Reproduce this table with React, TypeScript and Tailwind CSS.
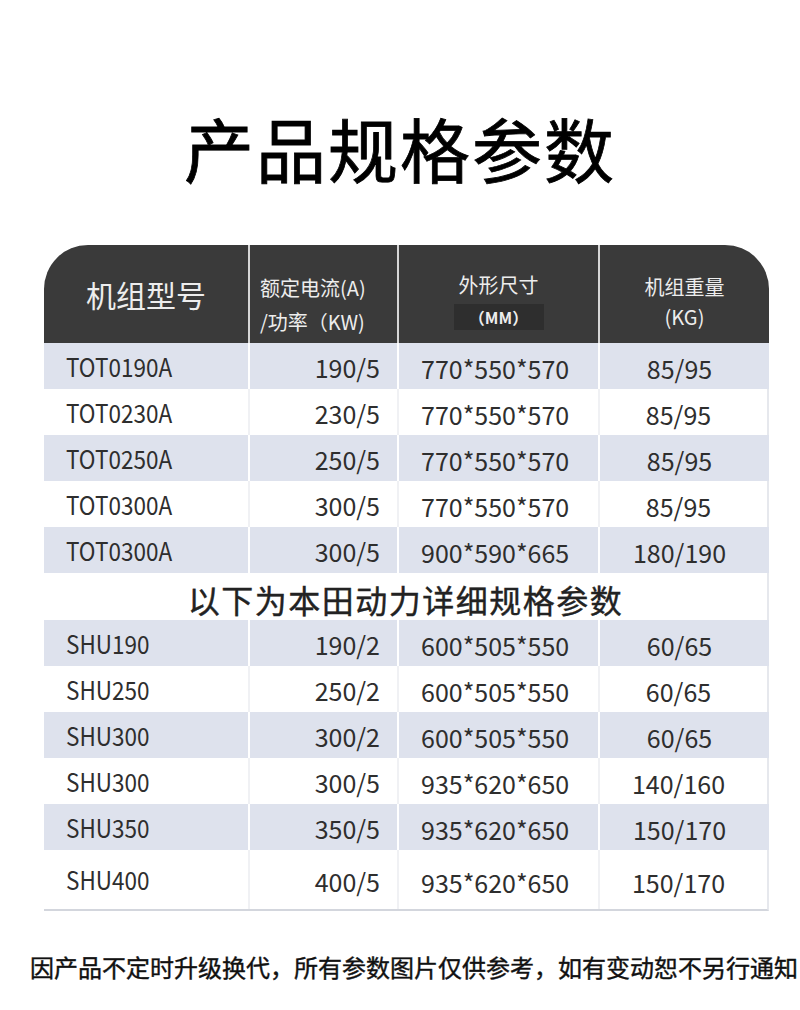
const FONT = "font-['Noto_Sans_CJK_SC','Noto_Sans',sans-serif]";

type Row = [string, string, string, string];

const totRows: Row[] = [
  ['TOT0190A', '190/5', '770*550*570', '85/95'],
  ['TOT0230A', '230/5', '770*550*570', '85/95'],
  ['TOT0250A', '250/5', '770*550*570', '85/95'],
  ['TOT0300A', '300/5', '770*550*570', '85/95'],
  ['TOT0300A', '300/5', '900*590*665', '180/190'],
];

const shuRows: Row[] = [
  ['SHU190', '190/2', '600*505*550', '60/65'],
  ['SHU250', '250/2', '600*505*550', '60/65'],
  ['SHU300', '300/2', '600*505*550', '60/65'],
  ['SHU300', '300/5', '935*620*650', '140/160'],
  ['SHU350', '350/5', '935*620*650', '150/170'],
  ['SHU400', '400/5', '935*620*650', '150/170'],
];

function DataRow({ row, shaded, last }: { row: Row; shaded: boolean; last?: boolean }) {
  const line = shaded ? 'border-white' : 'border-[#f0f1f4]';
  return (
    <div
      className={`grid grid-cols-[204px_149px_201px_1fr] text-[25px] leading-none text-[#2e2e2e] ${
        shaded ? 'bg-[#dee2ed]' : 'bg-white border-r-2 border-[#e6e8ed]'
      } ${last ? 'h-[61px] border-b-2 border-b-[#d3d6dd]' : 'h-[46px]'}`}
    >
      <div className="flex items-center pl-[22px]">
        <span className="inline-block origin-left scale-x-[0.9]">{row[0]}</span>
      </div>
      <div className={`flex items-center justify-end border-l-2 pr-[17px] pt-[3px] ${line}`}>{row[1]}</div>
      <div className={`flex items-center border-l-2 pl-[22px] pt-[5px] ${line}`}>{row[2]}</div>
      <div className={`flex items-center justify-center border-l-2 pr-[10px] pt-[5px] ${line}`}>{row[3]}</div>
    </div>
  );
}

export default function App() {
  return (
    <div className={`min-h-[1010px] w-[800px] bg-white ${FONT}`}>
      <h1 className="pt-[113px] text-center text-[70px] font-normal leading-none tracking-[2px] text-black [-webkit-text-stroke:0.8px_black]">
        产品规格参数
      </h1>

      <div className="ml-[44px] mt-[62px] w-[725px]">
        <div className="grid h-[98px] grid-cols-[204px_149px_201px_1fr] rounded-t-[44px] bg-[#3a3a3a] text-[#ededed]">
          <div className="flex items-center justify-center text-[30px] leading-none">机组型号</div>
          <div className="flex flex-col border-l-2 border-[#d6d6d6] pl-[10px] pt-[26px] text-[20px] leading-[34px]">
            <span>额定电流(A)</span>
            <span>/功率（KW)</span>
          </div>
          <div className="flex flex-col items-center border-l-2 border-[#d6d6d6] pt-[25px] text-[20px] leading-[30px]">
            <span>外形尺寸</span>
            <span className="mt-[4px] flex h-[26px] w-[90px] items-center justify-center bg-[#2e2e2e] text-[16px] font-bold">
              （MM）
            </span>
          </div>
          <div className="flex flex-col items-center border-l-2 border-[#d6d6d6] pt-[27px] text-[20px] leading-[30px]">
            <span>机组重量</span>
            <span>(KG)</span>
          </div>
        </div>

        {totRows.map((r, i) => (
          <DataRow key={'t' + i} row={r} shaded={i % 2 === 0} />
        ))}

        <div className="flex h-[47px] items-center justify-center border-r-2 border-[#e6e8ed] bg-white pt-[4px] text-[32px] font-normal leading-none tracking-[1.5px] text-[#222] [-webkit-text-stroke:0.4px_#222]">
          以下为本田动力详细规格参数
        </div>

        {shuRows.map((r, i) => (
          <DataRow key={'s' + i} row={r} shaded={i % 2 === 0} last={i === shuRows.length - 1} />
        ))}
      </div>

      <p className="mt-[44px] pl-[30px] text-[24px] font-normal leading-none text-[#111] [-webkit-text-stroke:0.4px_#111]">
        因产品不定时升级换代，所有参数图片仅供参考，如有变动恕不另行通知
      </p>
    </div>
  );
}
